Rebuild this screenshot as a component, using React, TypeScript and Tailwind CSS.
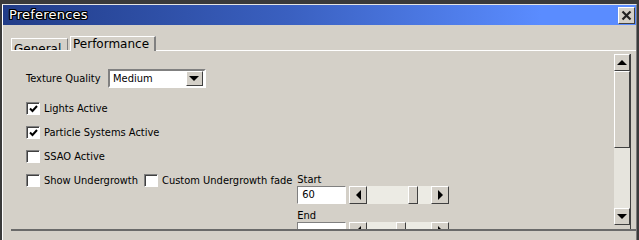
import React from 'react';

const ui = "font-['DejaVu_Sans_Condensed','DejaVu_Sans',sans-serif] text-[11px] leading-[12px] text-black";

function Raised({ className = '', children }: { className?: string; children?: React.ReactNode }) {
  return (
    <div className={`box-border flex items-center justify-center bg-[#d4d0c8] border border-t-white border-l-white border-r-[#404040] border-b-[#404040] ${className}`}>
      {children}
    </div>
  );
}

function Triangle({ dir }: { dir: 'up' | 'down' | 'left' | 'right' }) {
  const pts = {
    up: '0,6 5,1 10,6',
    down: '0,1 10,1 5,6',
    left: '6,0 6,10 1,5',
    right: '1,0 1,10 6,5',
  }[dir];
  const horizontal = dir === 'left' || dir === 'right';
  return (
    <svg width={horizontal ? 7 : 11} height={horizontal ? 11 : 7} viewBox={horizontal ? '0 0 7 11' : '0 0 11 7'}>
      <polygon points={pts} fill="#000" />
    </svg>
  );
}

function Checkbox({ checked, label }: { checked?: boolean; label: string }) {
  return (
    <div className="flex items-center gap-[4px] h-[13px]">
      <div className="box-border w-[14px] h-[13px] bg-white border border-t-[#808080] border-l-[#808080] border-r-white border-b-white shadow-[inset_1px_1px_0_#404040] flex items-center justify-center">
        {checked && (
          <svg width="9" height="8" viewBox="0 0 9 8">
            <path d="M1 3.5 L3.5 6 L8 1" stroke="#000" strokeWidth="2" fill="none" />
          </svg>
        )}
      </div>
      <span className="whitespace-nowrap">{label}</span>
    </div>
  );
}

function SliderRow({ value, thumb }: { value: string; thumb: number }) {
  return (
    <div className="flex items-center gap-[3px] h-[18px]">
      <div className="box-border w-[49px] h-[18px] bg-white border border-t-[#808080] border-l-[#808080] border-r-white border-b-white pl-[4px] flex items-center">
        {value}
      </div>
      <div className="flex h-[18px]">
        <Raised className="w-[18px] h-[18px]">
          <Triangle dir="left" />
        </Raised>
        <div className="w-[64px] h-[18px] bg-[#ecebe4] flex">
          <div style={{ width: thumb }} />
          <Raised className="w-[10px] h-[18px]" />
        </div>
        <Raised className="w-[18px] h-[18px]">
          <Triangle dir="right" />
        </Raised>
      </div>
    </div>
  );
}

export default function App() {
  return (
    <div className={`w-[639px] h-[240px] overflow-hidden bg-[#3a3a3a] pt-[4px] pl-[2px] ${ui}`}>
      <div className="w-[635px] h-[236px] border-t border-l border-t-[#e4e4e4] border-l-white border-r border-r-[#7a7a7a] bg-[#d4d0c8] flex flex-col">
        {/* Title bar */}
        <div className="h-[20px] flex items-center justify-between pl-[6px] pr-[1px] bg-[linear-gradient(90deg,#213c88_0%,#3a60c0_45%,#5a8cff_85%,#5a8cff_100%)]">
          <span className="font-['DejaVu_Sans',sans-serif] text-[13px] leading-[16px] text-white tracking-[0.2px] [text-shadow:1px_0_0_#000,-1px_0_0_#000,0_1px_0_#000,0_-1px_0_#000,1px_1px_0_#000,-1px_-1px_0_#000,1px_-1px_0_#000,-1px_1px_0_#000]">
            Preferences
          </span>
          <Raised className="w-[17px] h-[17px]">
            <svg width="11" height="11" viewBox="0 0 11 11">
              <path d="M1.5 1.5 L9.5 9.5 M9.5 1.5 L1.5 9.5" stroke="#222" strokeWidth="2.2" />
            </svg>
          </Raised>
        </div>

        {/* Tabs */}
        <div className="h-[25px] flex items-end pl-[8px]">
          <div className="box-border w-[57px] h-[12px] overflow-hidden border-t border-l border-t-white border-l-white border-r border-r-[#808080] pl-[2px] pt-[3px] text-[12px] leading-[14px] font-['DejaVu_Sans',sans-serif]">
            General
          </div>
          <div className="relative z-10 box-border ml-[2px] w-[86px] h-[15px] -mb-[1px] bg-[#d4d0c8] border-t border-l border-t-white border-l-white border-r-2 border-r-[#808080] pl-[2px] text-[12px] leading-[14px] font-['DejaVu_Sans',sans-serif]">
            Performance
          </div>
        </div>

        {/* Panel */}
        <div className="ml-[8px] h-[181px] border-t border-t-white border-b-2 border-b-[#6a6a6a] flex">
          <div className="flex-1 overflow-hidden pl-[15px] pt-[18px] flex flex-col">
            <div className="flex items-center gap-[4px] h-[19px]">
              <span className="w-[78px] whitespace-nowrap">Texture Quality</span>
              <div className="box-border w-[98px] h-[19px] bg-white border-2 border-t-[#808080] border-l-[#808080] border-r-white border-b-white flex items-center justify-between pl-[3px] pr-[1px]">
                <span>Medium</span>
                <Raised className="w-[17px] h-[15px]">
                  <Triangle dir="down" />
                </Raised>
              </div>
            </div>

            <div className="mt-[14px] flex flex-col gap-[11px]">
              <Checkbox checked label="Lights Active" />
              <Checkbox checked label="Particle Systems Active" />
              <Checkbox label="SSAO Active" />
              <div className="flex items-start gap-[6px] h-[13px]">
                <Checkbox label="Show Undergrowth" />
                <Checkbox label="Custom Undergrowth fade" />
                <div className="flex flex-col ml-[-1px]">
                  <span className="h-[12px]">Start</span>
                  <SliderRow value="60" thumb={41} />
                  <span className="h-[12px] mt-[6px]">End</span>
                  <SliderRow value="" thumb={29} />
                </div>
              </div>
            </div>
          </div>

          {/* Scrollbar */}
          <div className="w-[17px] mt-[3px] mr-[5px] flex flex-col border-r border-r-[#404040]">
            <Raised className="w-[16px] h-[17px]">
              <Triangle dir="up" />
            </Raised>
            <Raised className="w-[16px] h-[77px]" />
            <div className="w-[16px] h-[60px] bg-[#e6e4dd]" />
            <Raised className="w-[16px] h-[17px]">
              <Triangle dir="down" />
            </Raised>
          </div>
        </div>
      </div>
    </div>
  );
}
